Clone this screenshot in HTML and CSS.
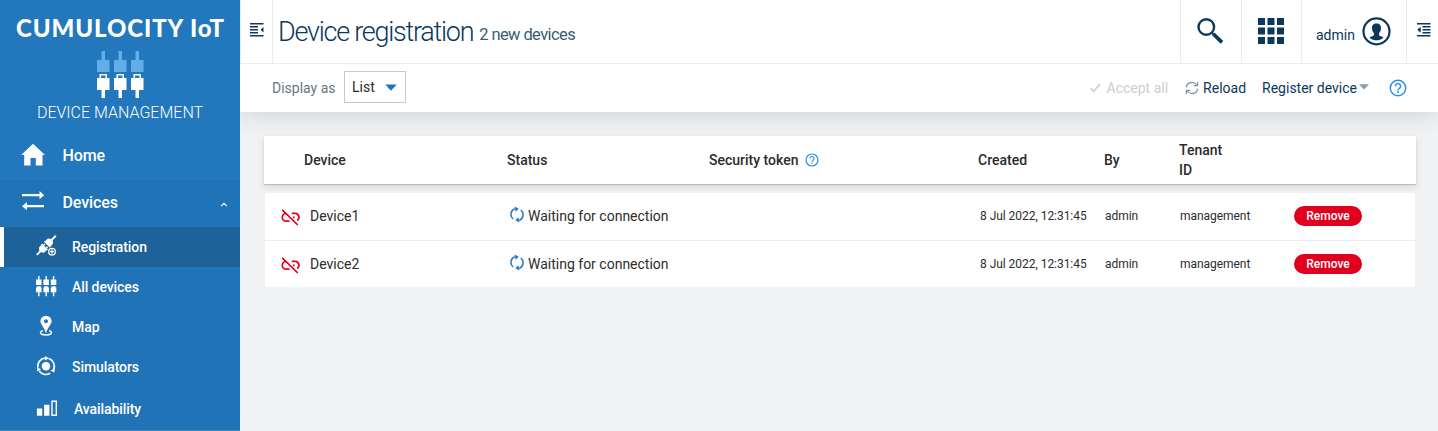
FILE: index.html
```html
<!DOCTYPE html>
<html lang="en">
<head>
<meta charset="utf-8">
<title>Device registration</title>
<link rel="stylesheet" href="styles.css">
</head>
<body>
<svg class="defs" width="0" height="0">
  <symbol id="help" viewBox="0 0 18 18"><circle cx="9" cy="9" r="7.7" fill="none" stroke="currentColor" stroke-width="1.5"/><path d="M6.400 7.200a2.600 2.600 0 1 1 4.200 2c-1 .8-1.600 1.100-1.600 2.200" fill="none" stroke="currentColor" stroke-width="1.500"/><path d="M8.200 12.300h1.600v1.600H8.200z" fill="currentColor"/></symbol>
  <symbol id="unlink" viewBox="0 0 20 18"><g fill="none" stroke="currentColor" stroke-width="1.700"><path d="M4.900 4.400a3.900 3.900 0 0 0 .6 7.800h3M10.800 4.400h3.400a3.900 3.900 0 0 1 1.900 7.200"/><path d="M1.200 .8l15.600 15.200"/><path d="M12 8.300h1.600"/></g></symbol>
  <symbol id="sync" viewBox="0 0 14 17"><g fill="none" stroke="currentColor" stroke-width="1.500"><path d="M4.700 2.800A6 6 0 0 0 3.200 13M9.300 14.200A6 6 0 0 0 10.800 4"/></g><path d="M4.500 .4l4.200 2.400-3 3zM9.500 16.600l-4.200-2.400 3-3z" fill="currentColor"/></symbol>
</svg>
<div class="app">
  <nav class="sidebar">
    <header class="brand">
      <div class="brand-name">CUMULOCITY IoT</div>
      <svg class="brand-icon" width="46" height="48" viewBox="0 0 46 48">
        <g fill="#62aeea"><path d="M4.500 0h3.500v9h4.500v12H0V9h4.500zM21.500 0H25v9h4.500v12H17V9h4.500zM38.500 0H42v9h4.500v12H34V9h4.500z"/></g>
        <g fill="#fff"><path d="M0 27h12.500v12H8v8H4.500v-8H0zM17 27h12.500v12H25v8h-3.500v-8H17zM34 27h12.500v12H42v8h-3.500v-8H34z"/></g>
        <path d="M3.200 27v-3.200h6V27M20.200 27v-3.200h6V27M37.200 27v-3.200h6V27" fill="none" stroke="#fff" stroke-width="1.500"/>
      </svg>
      <div class="brand-app">DEVICE MANAGEMENT</div>
    </header>
    <a class="nav-item home"><svg width="24" height="24" viewBox="0 0 24 24" fill="#fff"><path d="M12 -.3L24 10.900h-2.500V21.400h-6.700V14H9.500v7.400H3.200V10.900H.2z"/></svg><span>Home</span></a>
    <a class="nav-item devices"><svg width="24" height="24" viewBox="0 0 24 24" fill="#fff"><path d="M1 3.100h17.500V0L23.200 4.200l-4.700 4V5.300H1zM23 14.100H6v-3L1 15.300l5 4v-3H23z"/></svg><span>Devices</span><svg class="chev" width="8" height="5" viewBox="0 0 8 5"><path d="M1.200 4.200L4 1.400l2.800 2.800" fill="none" stroke="#fff" stroke-width="1.100"/></svg></a>
    <a class="sub active"><svg width="22" height="22" viewBox="0 0 22 22" fill="#fff"><g transform="translate(10.300 9.300) rotate(-45)"><path d="M.9 -4.200h1.500v.5h3.400L8 -1h5.500V1H8L5.800 3.700H2.400v.5H.9zM-1.800 -4.200h-1.500v.5h-3.400L-8.900 -1h-4.600V1h4.600l2.200 2.700h3.400v.5h1.500v-1.500H0v-1.500h-1.800v-2.400H0v-1.500h-1.800z"/></g><circle cx="16" cy="15.700" r="4.700" fill="#1d6299"/><circle cx="16" cy="15.700" r="3.300" fill="none" stroke="#fff" stroke-width="1.300"/><path d="M14.100 15h1.300v-1.400h1.200V15h1.300v1.300h-1.300v1.500h-1.200v-1.500h-1.300z"/></svg><span>Registration</span></a>
    <a class="sub"><svg width="22" height="22" viewBox="0 0 22 22" fill="#fff"><path d="M2.100 0h1.400v3.500h2v5.400H0V3.500h2.100zM9.500 0h1.400v3.500h2v5.400H7.400V3.500h2.100zM16.900 0h1.400v3.500h2v5.400h-5.500V3.500h2.100zM0 11.500h.8v-1.300h4v1.300h.7v4.700h-2v4H2.100v-4H0zM7.400 11.500h.8v-1.300h4v1.300h.7v4.700h-2v4H9.500v-4H7.400zM14.800 11.500h.8v-1.300h4v1.300h.7v4.700h-2v4h-1.400v-4h-2.100z"/></svg><span>All devices</span></a>
    <a class="sub"><svg width="22" height="22" viewBox="0 0 22 22" fill="#fff"><path fill-rule="evenodd" d="M10 -.3a5.600 5.600 0 0 0-5.600 5.600c0 3 4 6 5.600 12.100 1.600-6.100 5.600-9.100 5.600-12.100A5.600 5.600 0 0 0 10 -.3zm0 3.500a2 2 0 1 1 0 4 2 2 0 0 1 0-4z"/><path d="M6.900 14.700c-4 .9-3.100 4.300 3.100 4.300s7.100-3.400 3.100-4.300" fill="none" stroke="#fff" stroke-width="1.400"/></svg><span>Map</span></a>
    <a class="sub"><svg width="22" height="22" viewBox="0 0 22 22" fill="#fff"><circle cx="10" cy="10.200" r="4.200"/><g fill="none" stroke="#fff" stroke-width="1.700"><path d="M3.200 15a8.300 8.300 0 0 0 11 2.300M1.800 11.500A8.300 8.300 0 0 1 9 2M12.700 2.400a8.300 8.300 0 0 1 4.800 11.400"/></g><path d="M9 0l3.800 2.300L9 4.600zM1 15.200l.5-4.200 3.500 2.700zM18.800 12.300l-.5 4.200-3.800-1.800z"/></svg><span>Simulators</span></a>
    <a class="sub last"><svg width="22" height="22" viewBox="0 0 22 22" fill="#fff"><path d="M.9 10.500h5.300v7.300H.9zM8.100 6.700h5.300v11.100H8.100z"/><path d="M16 3.300h4.300v13.900H16z" fill="none" stroke="#fff" stroke-width="1.400"/></svg><span>Availability</span></a>
  </nav>
  <main class="main">
    <header class="topbar">
      <button class="toggle"><svg width="14" height="14" viewBox="0 0 14 14" fill="#0b385b"><path d="M0 0h13.500v1.400H0zM0 3h8v1.400H0zM0 6h8v1.400H0zM0 9h8v1.400H0zM0 12h13.500v1.400H0zM13.500 4v5.500L10.500 6.700z"/></svg></button>
      <h1>Device registration</h1><span class="count">2 new devices</span>
      <div class="cell search"><svg width="28" height="28" viewBox="0 0 28 28"><circle cx="9.300" cy="10" r="7.800" fill="none" stroke="#0b385b" stroke-width="2.400"/><path d="M14.800 15.500l2 2" stroke="#0b385b" stroke-width="2"/><path d="M16.400 17l8.600 8.300" stroke="#0b385b" stroke-width="3.800"/></svg></div>
      <div class="cell apps"><svg width="26" height="26" viewBox="0 0 26 26" fill="#0b385b"><path d="M0 0h7v7H0zM9.500 0h7v7h-7zM19 0h7v7h-7zM0 9.500h7v7H0zM9.500 9.500h7v7h-7zM19 9.500h7v7h-7zM0 19h7v7H0zM9.500 19h7v7h-7zM19 19h7v7h-7z"/></svg></div>
      <div class="cell user"><span>admin</span><svg width="28" height="28" viewBox="0 0 28 28"><circle cx="14.500" cy="14.400" r="13" fill="none" stroke="#0b385b" stroke-width="2.200"/><path d="M14.500 6.500c-3.300 0-4.700 2-4.500 5 .2 2 .8 3.500 1.900 4.600v2.300c-1.200.9-3 .8-4.400 2 1.500 1.800 4 2.900 7 2.900s5.500-1.100 7-2.900c-1.400-1.200-3.200-1.100-4.400-2v-2.300c1.100-1.100 1.700-2.600 1.900-4.600.2-3-1.200-5-4.500-5z" fill="#0b385b"/></svg></div>
      <button class="toggle right"><svg width="14" height="14" viewBox="0 0 14 14" fill="#0b385b"><path d="M0 0h13.500v1.400H0zM5.500 3h8v1.400h-8zM5.500 6h8v1.400h-8zM5.500 9h8v1.400h-8zM0 12h13.500v1.400H0zM3.700 3.700v6L.2 6.700z"/></svg></button>
    </header>
    <div class="actions">
      <span class="label">Display as</span>
      <div class="select"><span>List</span><svg width="12" height="7" viewBox="0 0 12 7"><path d="M.3.500h11.400L6 6.700z" fill="#1776bf"/></svg></div>
      <span class="accept"><svg width="11" height="10" viewBox="0 0 11 10"><path d="M.8 5.400l2.800 2.800L10.100 1" fill="none" stroke="#c9cfd3" stroke-width="1.700"/></svg><span>Accept all</span></span>
      <span class="reload"><svg width="14" height="14" viewBox="0 0 14 14"><path d="M1.200 6.300A5.800 5.800 0 0 1 11.800 4M12.800 7.700A5.800 5.800 0 0 1 2.200 10M12.700 .7v4H8.500M1.300 13.300v-4h4.200" fill="none" stroke="#8699a8" stroke-width="1.300"/></svg><span>Reload</span></span>
      <span class="register"><span>Register device</span><svg width="10" height="6" viewBox="0 0 10 6"><path d="M0 .3h10L5 5.600z" fill="#8a9cab"/></svg></span>
      <svg class="help-lg"><use href="#help"/></svg>
    </div>
    <section class="content">
      <div class="thead grid">
        <b>Device</b><b>Status</b><b class="token">Security token<svg width="14" height="14"><use href="#help"/></svg></b><b>Created</b><b>By</b><b class="tenant">Tenant<br>ID</b>
      </div>
      <div class="rows">
        <div class="row grid">
          <div class="device"><svg width="20" height="18"><use href="#unlink"/></svg><span>Device1</span></div>
          <div class="status"><svg width="14" height="17"><use href="#sync"/></svg><span>Waiting for connection</span></div>
          <div></div><small class="date">8 Jul 2022, 12:31:45</small><small>admin</small><small>management</small><button class="remove">Remove</button>
        </div>
        <div class="row grid">
          <div class="device"><svg width="20" height="18"><use href="#unlink"/></svg><span>Device2</span></div>
          <div class="status"><svg width="14" height="17"><use href="#sync"/></svg><span>Waiting for connection</span></div>
          <div></div><small class="date">8 Jul 2022, 12:31:45</small><small>admin</small><small>management</small><button class="remove">Remove</button>
        </div>
      </div>
    </section>
  </main>
</div>
</body>
</html>
```
FILE: styles.css
```css
* { box-sizing: border-box; }
body { margin: 0; font: 14px/20px Roboto, "Liberation Sans", sans-serif; color: #2c2c2c; }
.defs { display: block; position: absolute; }
svg { flex: none; display: block; overflow: visible; }
button { font: inherit; border: 0; padding: 0; background: none; }
.app { display: flex; width: 1438px; height: 431px; overflow: hidden; background: #f1f2f3; }

.sidebar { width: 240px; flex: none; height: 431px; background: #2277bd; color: #fff; display: flex; flex-direction: column; overflow: hidden; }
.brand { height: 131px; flex: none; display: flex; flex-direction: column; align-items: center; padding-top: 14px; }
.brand-name { font: 900 24px/28px Lato, sans-serif; letter-spacing: 0.9px; margin-right: -1px; white-space: nowrap; }
.brand-icon { margin-top: 9px; }
.brand-app { font-weight: 300; font-size: 16px; line-height: 20px; margin-top: 4px; white-space: nowrap; }
.nav-item { height: 49px; flex: none; display: flex; align-items: center; padding-left: 21px; font-size: 16px; font-weight: 500; letter-spacing: -0.1px; }
.nav-item span { margin-left: 17.5px; }
.devices { height: 47px; background: #2173b7; border-top: 1px solid #2070b1; padding-bottom: 2px; }
.chev { margin-left: auto; margin-right: 12px; margin-top: 2px; }
.sub { height: 40px; flex: none; display: flex; align-items: center; padding-left: 36px; background: #2173b7; font-weight: 500; letter-spacing: -0.08px; }
.sub span { margin-left: 14px; }
.active { background: #1d6299; border-left: 4px solid #fff; padding-left: 32px; }
.last { height: 44px; padding-top: 1px; border-bottom: 1px solid #3f87c3; }
.last span { margin-left: 16px; }

.main { flex: 1; display: flex; flex-direction: column; overflow: hidden; }
.topbar { position: relative; z-index: 2; height: 64px; flex: none; display: flex; background: #fff; border-bottom: 1px solid #ebecee; border-left: 1px solid #ebecee; color: #0b385b; }
.toggle { width: 32px; height: 63px; border-right: 1px solid #ebecee; padding: 23px 0 0 9px; display: flex; align-items: flex-start; }
.toggle.right { border-right: 0; border-left: 1px solid #ebecee; padding-left: 10px; }
h1 { margin: 0 0 0 5px; font-size: 27px; font-weight: 300; line-height: 64px; letter-spacing: -1.25px; white-space: nowrap; }
.count { margin-left: 6px; font-size: 16.500px; line-height: 69px; letter-spacing: -0.6px; color: #3a5a76; white-space: nowrap; }
.cell { height: 63px; border-left: 1px solid #ebecee; display: flex; }
.search { width: 61px; margin-left: auto; padding: 17px 0 0 16px; }
.apps { width: 60px; padding: 18px 0 0 16px; }
.user { width: 105px; padding: 17px 0 0 14px; }
.user span { margin: 8px 7px 0 0; }
.actions { height: 48px; flex: none; display: flex; align-items: center; padding: 0 31px 0 32px; background: #fff; color: #0b385b; box-shadow: 0 4px 22px rgba(30,45,55,.15); z-index: 1; white-space: nowrap; }
.label { color: #67767f; width: 72px; margin-top: -1px; }
.select { width: 62px; height: 32px; margin-top: -2px; border: 1px solid #c5cace; display: flex; align-items: center; padding-left: 7px; color: #2c2c2c; }
.select svg { margin-left: auto; margin-right: 8px; }
.accept { margin-left: auto; display: flex; align-items: center; color: #c9cfd3; gap: 6px; }
.reload { display: flex; align-items: center; gap: 4px; margin-left: 17px; }
.register { display: flex; gap: 2px; margin-left: 16px; }
.register svg { margin-top: 6px; }
.help-lg { width: 18px; height: 18px; margin-left: 20px; color: #2b8fe3; }

.content { padding: 24px 22px 0 24px; }
.grid { display: grid; grid-template-columns: 203px 202px 269px 126px 75px 115px 1fr; align-items: center; }
.thead { height: 48px; padding-left: 40px; background: #fff; box-shadow: 0 1px 1px rgba(60,70,80,.22), 0 3px 7px rgba(60,70,80,.15); }
.thead b { font-weight: 500; }
.token { display: flex; align-items: center; gap: 6px; }
.token svg { color: #2b8fe3; }
.rows { margin: 9px 1px 0; }
.row { height: 47px; background: #fff; padding: 0 0 1px 39px; }
.row + .row { padding-bottom: 0; border-top: 1px solid #ebecee; }
.device { display: flex; align-items: center; margin-left: -23px; gap: 9px; }
.device svg { color: #e0001e; margin-top: 3px; }
.status { display: flex; align-items: center; gap: 4px; margin-left: 3px; }
.status svg { color: #2277bd; margin-top: -3px; }
small { font-size: 12px; letter-spacing: -0.04px; margin-left: 1px; white-space: nowrap; }
.date { margin-left: 2px; }
.remove { width: 68px; height: 20px; border-radius: 10px; background: #e0001e; color: #fff; font-size: 12px; font-weight: 500; line-height: 20px; text-align: center; }
```
